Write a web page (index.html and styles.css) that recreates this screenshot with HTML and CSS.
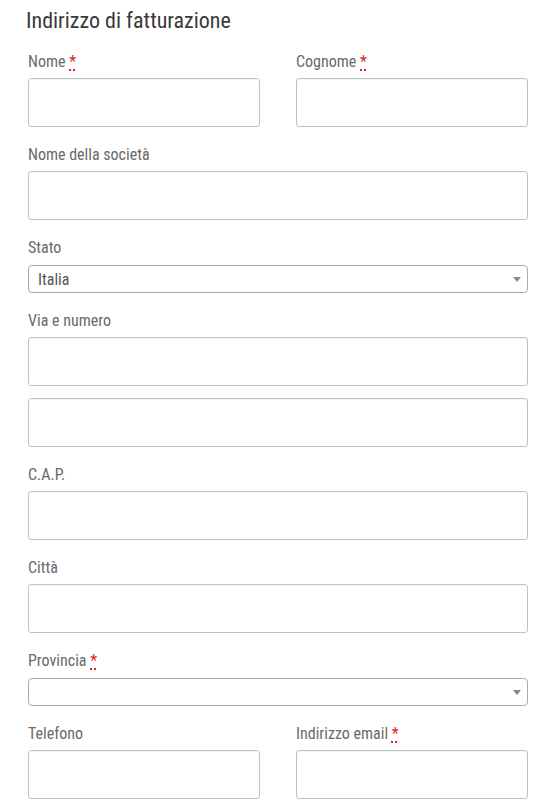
FILE: index.html
```html
<!DOCTYPE html>
<html lang="it">
<head>
  <meta charset="UTF-8" />
  <meta name="viewport" content="width=device-width, initial-scale=1.0"/>
  <title>Indirizzo di fatturazione</title>
  <link rel="stylesheet" href="styles.css">
</head>
<body>

<!-- Billing form -->
<div class="billing">
  <h3>Indirizzo di fatturazione</h3>

  <div class="fields">
    <p class="field half">
      <label for="first-name">Nome <abbr class="required" title="obbligatorio">*</abbr></label>
      <input type="text" id="first-name" />
    </p>
    <p class="field half">
      <label for="last-name">Cognome <abbr class="required" title="obbligatorio">*</abbr></label>
      <input type="text" id="last-name" />
    </p>

    <p class="field wide">
      <label for="company">Nome della società</label>
      <input type="text" id="company" />
    </p>

    <p class="field wide">
      <label for="country">Stato</label>
      <span class="select-wrap">
        <select id="country">
          <option>Italia</option>
        </select>
      </span>
    </p>

    <p class="field wide">
      <label for="address-1">Via e numero</label>
      <input type="text" id="address-1" />
      <input type="text" id="address-2" class="second" />
    </p>

    <p class="field wide">
      <label for="postcode">C.A.P.</label>
      <input type="text" id="postcode" />
    </p>

    <p class="field wide">
      <label for="city">Città</label>
      <input type="text" id="city" />
    </p>

    <p class="field wide">
      <label for="state">Provincia <abbr class="required" title="obbligatorio">*</abbr></label>
      <span class="select-wrap">
        <select id="state">
          <option></option>
        </select>
      </span>
    </p>

    <p class="field half">
      <label for="phone">Telefono</label>
      <input type="tel" id="phone" />
    </p>
    <p class="field half">
      <label for="email">Indirizzo email <abbr class="required" title="obbligatorio">*</abbr></label>
      <input type="email" id="email" />
    </p>
  </div>
</div>

</body>
</html>
```

FILE: styles.css
```css
body {
  font-family: Roboto, "Noto Sans", Arial, sans-serif;
  font-stretch: condensed;
  background: #fff;
  margin: 0;
  padding: 0;
}
.billing {
  padding: 0 24px 0 28px;
}
h3 {
  font-size: 22px;
  font-weight: 400;
  line-height: 25px;
  color: #3a3a3a;
  margin: 8px 0 19px -2px;
}
.fields {
  display: grid;
  grid-template-columns: 1fr 1fr;
  column-gap: 36px;
}
.field {
  margin: 0 0 18px;
}
.wide {
  grid-column: 1 / 3;
}
label {
  display: block;
  font-size: 16px;
  line-height: 20px;
  color: #6a6a6a;
  margin-bottom: 6px;
}
.required {
  color: #e2231a;
  text-decoration: underline dotted;
  text-decoration-thickness: 2px;
  text-underline-offset: 2px;
}
input {
  display: block;
  box-sizing: border-box;
  width: 100%;
  height: 49px;
  margin: 0;
  padding: 0 9px;
  border: 1px solid #c2c2c2;
  border-radius: 3px;
  box-shadow: inset 0 1px 1px rgba(0,0,0,0.04);
  font: inherit;
  font-size: 16px;
  background: #fff;
}
input.second {
  margin-top: 12px;
}
.select-wrap {
  display: block;
  position: relative;
  padding-top: 1px;
}
.select-wrap::after {
  content: "";
  position: absolute;
  right: 7px;
  top: 13px;
  border-left: 4px solid transparent;
  border-right: 4px solid transparent;
  border-top: 5px solid #888;
}
select {
  display: block;
  box-sizing: border-box;
  width: 100%;
  height: 28px;
  margin: 0;
  padding: 0 9px;
  border: 1px solid #aaa;
  border-radius: 4px;
  background: #fff;
  color: #555;
  font: inherit;
  font-size: 16px;
  appearance: none;
  -webkit-appearance: none;
}
```
